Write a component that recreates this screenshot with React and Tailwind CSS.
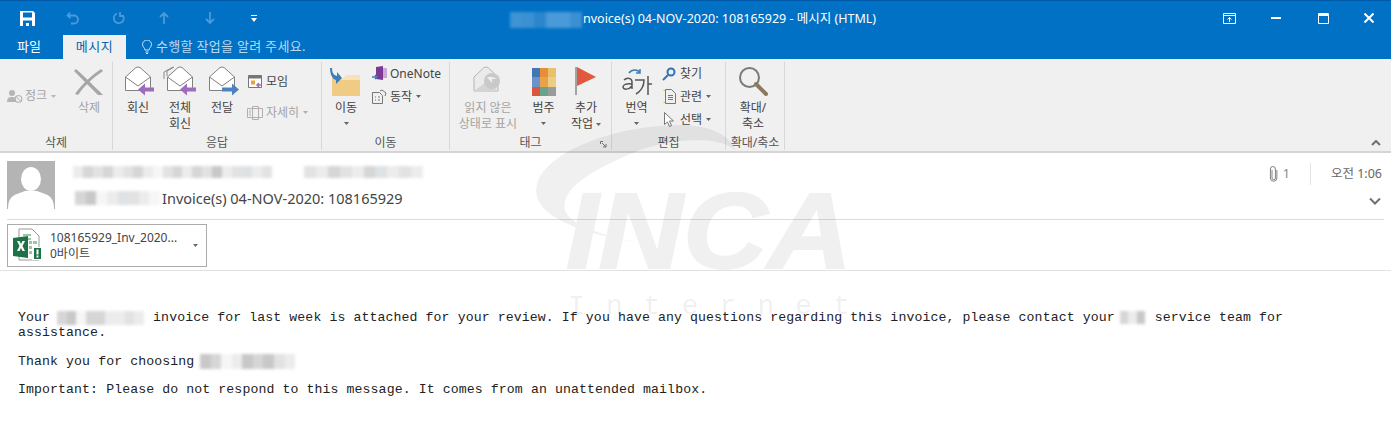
import React from "react";

const KR = "font-['Segoe_UI','Noto_Sans','Noto_Sans_CJK_KR',sans-serif]";

function Mosaic({ cells, className }) {
  return (
    <div className={"flex overflow-hidden blur-[1.5px] " + className}>
      {cells.map((c, i) => (
        <div key={i} className={"flex-1 " + c} />
      ))}
    </div>
  );
}

const a = "bg-[#d6d6d6]", b = "bg-[#e2e2e2]", c = "bg-[#ececec]", d = "bg-[#f6f6f6]", e = "bg-[#c8c8c8]", f = "bg-[#dde2e4]";

const Caret = ({ cls = "fill-[#666]" }) => (
  <svg width="5" height="3" viewBox="0 0 5 3" className={"inline-block " + cls}><path d="M0 0h5L2.5 3z" /></svg>
);

const Envelope = ({ back, arrow }) => (
  <svg width="36" height="30" viewBox="0 0 36 30" fill="none">
    {back && <path d="M2 13 V6 L11 1 M5 10 V5 L12 1" stroke="#8a8a8a" />}
    <path d="M5.5 11 L16 1.5 Q18 0.5 20 1.5 L30.5 11 V24.5 H5.5 Z" fill="#fff" stroke="#808080" />
    <path d="M5.5 11 L18 20 L30.5 11" stroke="#808080" />
    {arrow === "left" && <path d="M18 23.5 L25 17.5 V21.5 H34 V25.5 H25 V29.5 Z" fill="#9d6cba" />}
    {arrow === "right" && <path d="M35 23.5 L28 17.5 V21.5 H18 V25.5 H28 V29.5 Z" fill="#4c83bf" />}
  </svg>
);

function Large({ icon, lines, caret, w, disabled, iconH = "h-[34px]" }) {
  return (
    <div className={"flex flex-col items-center " + w}>
      <div className={"flex items-end justify-center " + iconH}>{icon}</div>
      <div className={"mt-[4px] flex flex-col items-center text-[12px] leading-[16px] " + (disabled ? "text-[#a3a3a3]" : "text-[#444]")}>
        {lines.map((l, i) => (
          <span key={i} className="flex items-center gap-[3px] whitespace-nowrap">{l}</span>
        ))}
        {caret && <span className="mt-[5px] flex h-[5px] items-center"><Caret /></span>}
      </div>
    </div>
  );
}

function Small({ icon, label, caret, disabled }) {
  return (
    <div className={"flex h-[23px] items-center gap-[3px] whitespace-nowrap text-[12px] " + (disabled ? "text-[#a3a3a3]" : "text-[#444]")}>
      <span className="flex w-[16px] justify-center">{icon}</span>
      <span>{label}</span>
      {caret && <span className="ml-[1px] flex"><Caret cls={disabled ? "fill-[#b0b0b0]" : "fill-[#666]"} /></span>}
    </div>
  );
}

function Group({ w, label, children, extra }) {
  return (
    <div className={"relative mt-[3px] mb-[1px] flex shrink-0 flex-col border-r border-[#d8d8d8] " + w}>
      <div className="flex h-[73px] shrink-0 items-start">{children}</div>
      <div className="flex h-[15px] shrink-0 items-center justify-center text-[12px] text-[#555]">{label}</div>
      {extra}
    </div>
  );
}

export default function App() {
  return (
    <div className={"relative h-[430px] w-[1391px] overflow-hidden bg-white " + KR}>
      {/* title bar */}
      <div className="flex h-[35px] items-center border-t border-[#0058a8] bg-[#0071c5] text-white">
        <div className="flex w-[280px] items-center pl-[20px]">
          <svg width="15" height="15" viewBox="0 0 15 15" className="mr-[31px]"><path d="M0 0h13l2 2v13H0z" fill="#fff" /><path d="M3 1.5h9v5H3z" fill="#0071c5" /><path d="M3 9.5h9V15H9v-3H6v3H3z" fill="#0071c5" /></svg>
          <svg width="14" height="14" viewBox="0 0 14 14" fill="none" stroke="#4d9ad8" strokeWidth="1.8" className="mr-[32px]"><path d="M4 1.5 1.5 4.5 4.5 7M2 4.5h6a4 4 0 0 1 0 8H5" /></svg>
          <svg width="14" height="14" viewBox="0 0 14 14" fill="none" stroke="#4d9ad8" strokeWidth="1.8" className="mr-[33px]"><path d="M5 2.5a5 5 0 1 0 6 2M8 1v4h4" /></svg>
          <svg width="10" height="12" viewBox="0 0 10 12" fill="none" stroke="#4d9ad8" strokeWidth="1.8" className="mr-[36px]"><path d="M5 12V1M1 5l4-4 4 4" /></svg>
          <svg width="10" height="12" viewBox="0 0 10 12" fill="none" stroke="#4d9ad8" strokeWidth="1.8" className="mr-[36px]"><path d="M5 0v11M1 7l4 4 4-4" /></svg>
          <svg width="6" height="7" viewBox="0 0 6 7" fill="#fff"><path d="M0 0h6v1H0zM0 3h6L3 7z" /></svg>
        </div>
        <div className="mt-[3px] ml-[230px] flex items-center text-[12.5px]">
          <Mosaic className="mr-[1px] h-[16px] w-[72px]" cells={["bg-[#3d93d4]", "bg-[#3a90d2]", "bg-[#2a87cd]", "bg-[#4a9ad8]", "bg-[#4a9ad8]", "bg-[#3a90d2]"]} />
          <span className="whitespace-nowrap">nvoice(s) 04-NOV-2020: 108165929 - 메시지 (HTML)</span>
        </div>
        <div className="ml-auto flex items-center pr-[17px]">
          <svg width="13" height="11" viewBox="0 0 13 11" fill="none" stroke="#fff" className="mr-[35px]"><path d="M.5.5h12v10H.5zM.5 2.5h12" /><path d="M6.5 9V4.5M4.5 6.5l2-2 2 2" /></svg>
          <svg width="10" height="2" viewBox="0 0 10 2" fill="#fff" className="mr-[37px]"><path d="M0 0h10v2H0z" /></svg>
          <svg width="11" height="11" viewBox="0 0 11 11" fill="none" stroke="#fff" className="mr-[35px]"><path d="M.5.5h10v10H.5z" /><path d="M.5 2h10" strokeWidth="2" /></svg>
          <svg width="10" height="10" viewBox="0 0 10 10" stroke="#fff" strokeWidth="2"><path d="M.5.5l9 9M9.5.5l-9 9" /></svg>
        </div>
      </div>

      {/* tabs */}
      <div className="flex h-[24px] items-stretch bg-[#0071c5] text-[13px] text-white">
        <div className="flex w-[63px] items-center pl-[17px]">파일</div>
        <div className="flex w-[63px] items-center justify-center bg-[#f0f0f0] tracking-[0.5px] text-[#0a62ad]">메시지</div>
        <div className="ml-[16px] flex items-center gap-[4px] tracking-[0.3px] text-[#b9d9f0]">
          <svg width="10" height="14" viewBox="0 0 10 14" fill="none" stroke="#cfe4f5"><path d="M3 10C3 8 .5 7 .5 4.5a4.5 4.5 0 0 1 9 0C9.500 7 7 8 7 10zM3.500 12h3M4 13.500h2" /></svg>
          <span>수행할 작업을 알려 주세요.</span>
        </div>
      </div>

      {/* ribbon */}
      <div className="flex h-[94px] border-b-2 border-[#d4d4d4] bg-[#f0f0f0]">
        <Group w="w-[113px]" label="삭제">
          <div className="mt-[25px] ml-[7px] w-[60px]">
            <div className="flex items-center gap-[2px] text-[12px] text-[#a3a3a3]">
              <svg width="16" height="16" viewBox="0 0 16 16"><circle cx="5" cy="5" r="3" fill="#b5b5b5" /><path d="M0 14c0-4 2-5 5-5s4 1 4 2v3z" fill="#b5b5b5" /><circle cx="11.500" cy="11" r="3.500" fill="#f0f0f0" stroke="#aaa" /><path d="M9 8.500l5 5" stroke="#aaa" /></svg>
              <span>정크</span>
              <span className="ml-[2px] flex"><Caret cls="fill-[#b5b5b5]" /></span>
            </div>
          </div>
          <Large
            w="w-[44px]"
            disabled
            lines={["삭제"]}
            icon={<svg width="30" height="28" viewBox="0 0 30 28"><path d="M2 1 C10 8 20 18 29 27 L24 27 C16 19 8 11 0 3Z" fill="#a6a6a6" /><path d="M29 3 C20 9 10 18 4 27 L1 26 C8 16 18 7 27 1Z" fill="#a6a6a6" /></svg>}
          />
        </Group>

        <Group w="w-[209px]" label="응답">
          <Large w="w-[50px]" lines={["회신"]} icon={<Envelope arrow="left" />} />
          <Large w="w-[34px]" lines={["전체", "회신"]} icon={<Envelope back arrow="left" />} />
          <Large w="w-[50px]" lines={["전달"]} icon={<Envelope arrow="right" />} />
          <div className="mt-[8px] flex flex-col gap-[8px]">
            <Small label="모임" icon={<svg width="15" height="14" viewBox="0 0 15 14"><path d="M.5.500h13v12H.5z" fill="#fff" stroke="#777" /><path d="M.5.500h13v3H.5z" fill="#777" /><path d="M3 5.500h4v4H3z" fill="#e9a23b" /><path d="M14 10H9m2-2-2 2 2 2" stroke="#9d6cba" fill="none" strokeWidth="1.500" /></svg>} />
            <Small disabled caret label="자세히" icon={<svg width="16" height="14" viewBox="0 0 16 14" fill="none" stroke="#b0b0b0"><path d="M.5 2.500h15v9H.5zM5.500.500h6v13h-6zM2 5h2M2 7h2M2 9h2" /></svg>} />
          </div>
        </Group>

        <Group w="w-[128px]" label="이동">
          <Large
            w="w-[48px]"
            caret
            lines={["이동"]}
            icon={<svg width="32" height="28" viewBox="0 0 32 28"><path d="M2 10h12l3-3h13v21H2z" fill="#f0cb83" /><path d="M14 10l3-3h13v5H2" fill="#f7e3b5" /><path d="M2-1c0 5 1 8 5 9V4l5 6-6 6v-4C2 11 0 6 0-1z" fill="#3f7db8" /></svg>}
          />
          <div className="ml-[1px] flex flex-col">
            <Small label="OneNote" icon={<svg width="15" height="15" viewBox="0 0 15 15"><path d="M4 1l7-1v14l-7-1z" fill="#7b3a96" /><path d="M11 2h4v10h-4z" fill="#c9a7d6" /><path d="M0 11h5M3 9l2 2-2 2" stroke="#3f7db8" strokeWidth="1.500" fill="none" /></svg>} />
            <Small caret label="동작" icon={<svg width="15" height="15" viewBox="0 0 15 15" fill="none" stroke="#777"><path d="M.5 3.500h7l3 3v8h-10zM3 8h1M3 11h1M6 8h2M6 11h2M8 2l2-1 4 3-1 3" /></svg>} />
          </div>
        </Group>

        <Group
          w="w-[162px]"
          label="태그"
          extra={<svg width="7" height="7" viewBox="0 0 7 7" fill="none" stroke="#777" className="absolute right-[4px] bottom-[2px]"><path d="M.5 3V.5H3M2 2l4 4M6 3v3H3" /></svg>}
        >
          <Large
            w="w-[76px]"
            disabled
            lines={["읽지 않은", "상태로 표시"]}
            icon={<svg width="32" height="30" viewBox="0 0 32 30"><path d="M2 11 12 1.500q2-1 4 0L26 11v14H2z" fill="#ebebeb" stroke="#b5b5b5" /><path d="M2 25l12-9 12 9z" fill="#d4d4d4" /><circle cx="20" cy="15" r="8" fill="#c9c9c9" /><path d="M15 11l5 6 0-4 5 0-5-2z" fill="#f0f0f0" /></svg>}
          />
          <Large
            w="w-[35px]"
            caret
            lines={["범주"]}
            icon={<div className="grid h-[28px] w-[24px] grid-cols-3 grid-rows-3"><i className="bg-[#3f78b5]" /><i className="bg-[#e98e36]" /><i className="bg-[#e8c26a]" /><i className="bg-[#6b93c9]" /><i className="bg-[#e7a24e]" /><i className="bg-[#eccd82]" /><i className="bg-[#d9553b]" /><i className="bg-[#6aa38a]" /><i className="bg-[#9a9a9a]" /></div>}
          />
          <Large
            w="w-[50px]"
            lines={["추가", <>작업<Caret /></>]}
            icon={<svg width="22" height="30" viewBox="0 0 22 30"><path d="M1 1v28" stroke="#8a8a8a" strokeWidth="1.500" /><path d="M2 1l19 10L2 20z" fill="#e2583e" /></svg>}
          />
        </Group>

        <Group w="w-[114px]" label="편집">
          <Large
            w="w-[49px]"
            caret
            lines={["번역"]}
            icon={<svg width="32" height="30" viewBox="0 0 32 30" fill="none"><path d="M8 7c3-4 9-4 11 0M19 3v4h-4" stroke="#3f7db8" strokeWidth="1.500" /><path d="M3 14c3-3 8-2 8 2v7M11 18c-6-1-9 1-9 3 0 3 6 3 9-1" stroke="#555" strokeWidth="1.500" /><path d="M14 14h9c0 6-3 11-8 14M27 10v19M27 18h4" stroke="#555" strokeWidth="1.500" /></svg>}
          />
          <div className="flex flex-col">
            <Small label="찾기" icon={<svg width="14" height="14" viewBox="0 0 14 14" fill="none" stroke="#2f74b5" strokeWidth="2"><circle cx="9" cy="5" r="3.500" /><path d="M6 8l-5 5" /></svg>} />
            <Small caret label="관련" icon={<svg width="13" height="15" viewBox="0 0 13 15" fill="none" stroke="#777"><path d="M.5 1.500h2v12h-2" stroke="#e0b650" /><path d="M2.500.500h6l4 4v10h-10zM5 6.500h5M5 8.500h5M5 10.500h5" /></svg>} />
            <Small caret label="선택" icon={<svg width="11" height="15" viewBox="0 0 11 15" fill="#fff" stroke="#777"><path d="M.5.500v12l3-2.500 2 4.500 2-1-2-4.500h4z" /></svg>} />
          </div>
        </Group>

        <Group w="w-[59px]" label="확대/축소">
          <Large
            w="w-[54px]"
            lines={["확대/", "축소"]}
            icon={<svg width="30" height="30" viewBox="0 0 30 30" fill="none"><circle cx="11.500" cy="11.500" r="9.500" stroke="#7a7a7a" strokeWidth="2" /><path d="M18 18l10 10" stroke="#8a7a60" strokeWidth="4" strokeLinecap="round" /></svg>}
          />
        </Group>

        <div className="ml-auto flex items-end pr-[10px] pb-[5px]">
          <svg width="10" height="6" viewBox="0 0 10 6" fill="none" stroke="#707070" strokeWidth="2"><path d="M1 5l4-4 4 4" /></svg>
        </div>
      </div>

      {/* message header */}
      <div className="mx-[7px] flex h-[67px] border-b border-[#dcdcdc] pr-[1px]">
        <div className="mt-[8px] h-[48px] w-[48px] shrink-0 overflow-hidden bg-[#b4b4b4]">
          <svg width="48" height="48" viewBox="0 0 48 48" fill="#fff"><ellipse cx="24" cy="18" rx="10" ry="12" /><path d="M1 48c0-9 3-13 9-15l8-3h12l8 3c6 2 9 6 9 15z" /></svg>
        </div>
        <div className="ml-[18px] flex flex-col pt-[12px]">
          <div className="flex h-[13px] items-center">
            <Mosaic className="h-[12px] w-[199px]" cells={[c, a, b, a, c, b, a, c, d, b, a, c, a, b, e, c, b, f, c, b]} />
            <Mosaic className="ml-[32px] h-[12px] w-[119px]" cells={[b, c, a, b, c, a, f, c, b, c]} />
          </div>
          <div className="mt-[10px] flex items-center pl-[2px]">
            <Mosaic className="h-[14px] w-[85px]" cells={[a, e, d, c, f, b, c, d]} />
            <span className="ml-[2px] text-[14.5px] leading-[20px] whitespace-nowrap text-[#444]">Invoice(s) 04-NOV-2020: 108165929</span>
          </div>
        </div>
        <div className="ml-auto flex flex-col items-end">
          <div className="mt-[10px] flex items-center text-[12.5px] text-[#666]">
            <svg width="9" height="16" viewBox="0 0 9 16" fill="none" stroke="#808080"><path d="M3 4v8a1.700 1.700 0 0 0 3.400 0V3a2.500 2.500 0 0 0-5 0v9a3.200 3.200 0 0 0 6.500 0V4" /></svg>
            <span className="ml-[5px] text-[#6a9a8f]">1</span>
            <span className="mx-[20px] h-[22px] w-px bg-[#e4e4e4]" />
            <span className="mr-[1px]">오전 1:06</span>
          </div>
          <svg width="12" height="8" viewBox="0 0 12 8" fill="none" stroke="#707070" strokeWidth="2" className="mt-[12px] mr-[2px]"><path d="M1 1.500l5 5 5-5" /></svg>
        </div>
      </div>

      {/* attachment */}
      <div className="flex h-[51px] items-center border-b border-[#e2e2e2] pl-[7px]">
        <div className="flex h-[43px] w-[200px] items-center border border-[#ababab] pl-[5px]">
          <svg width="32" height="34" viewBox="0 0 32 34" className="shrink-0">
            <path d="M6 1h13l7 7v24H6z" fill="#fff" stroke="#9a9a9a" />
            <path d="M10 6h8v2h-8zM10 10h8v2h-8zM20 13h4v3h-4zM16 13h3v3h-3zM16 18h3v3h-3zM16 23h3v3h-3z" fill="#9dc6a9" />
            <path d="M0 10l15-2v22L0 28z" fill="#1f7246" />
            <path d="M4 13h2.500l1.500 3 1.500-3H12l-2.500 5 2.500 5H9.500L8 20l-1.500 3H4l2.500-5z" fill="#fff" />
            <path d="M19 19h11v13H19z" fill="#fff" />
            <path d="M21 20h7v11h-7z" fill="#1f7246" />
            <path d="M23.500 21.500h2v5h-2zM23.500 27.500h2v2h-2z" fill="#fff" />
          </svg>
          <div className="mt-[1px] ml-[5px] flex flex-col text-[12px] leading-[16px] text-[#444]">
            <span className="whitespace-nowrap">108165929_Inv_2020...</span>
            <span>0바이트</span>
          </div>
          <span className="mr-[8px] ml-auto flex"><Caret /></span>
        </div>
      </div>

      {/* body */}
      <div className="w-[1300px] pt-[39px] pl-[18px] font-['Liberation_Mono',monospace] text-[13.2px] leading-[15px] tracking-[0.1px] text-[#222]">
        <p className="relative">
          Your <span className="inline-block w-[79px]" /> &nbsp;invoice for last week is attached for your review. If you have any questions regarding this invoice, please contact your <span className="inline-block w-[24px]" /> service team for assistance.
          <Mosaic className="absolute top-[1px] left-[39px] h-[14px] w-[87px]" cells={[a, e, d, a, a, c, c, b, c]} />
          <Mosaic className="absolute top-[1px] left-[1102px] h-[13px] w-[25px]" cells={[a, c, e]} />
        </p>
        <p className="relative mt-[14px]">
          Thank you for choosing
          <Mosaic className="absolute top-[0px] left-[182px] h-[15px] w-[95px]" cells={[e, a, d, c, e, a, e, b, c]} />
        </p>
        <p className="mt-[13px]">Important: Please do not respond to this message. It comes from an unattended mailbox.</p>
      </div>

      {/* watermark */}
      <svg width="1391" height="430" viewBox="0 0 1391 430" className="pointer-events-none absolute top-0 left-0">
        <g opacity="0.055">
          <path d="M640 243C570 232 530 212 537 185C545 150 620 125 680 125C710 125 730 135 735 150C720 137 680 137 640 150C590 170 560 190 565 210C570 225 600 235 640 243Z" fill="#000" />
          <text x="566" y="268" fill="#000" stroke="#000" strokeWidth="2" fontFamily="'Liberation Sans',sans-serif" fontSize="108" fontStyle="italic" fontWeight="700" textLength="286" lengthAdjust="spacingAndGlyphs">INCA</text>
          <text x="568" y="314" fill="#000" fontFamily="'Liberation Mono',monospace" fontSize="28" textLength="282">Internet</text>
        </g>
      </svg>
    </div>
  );
}
